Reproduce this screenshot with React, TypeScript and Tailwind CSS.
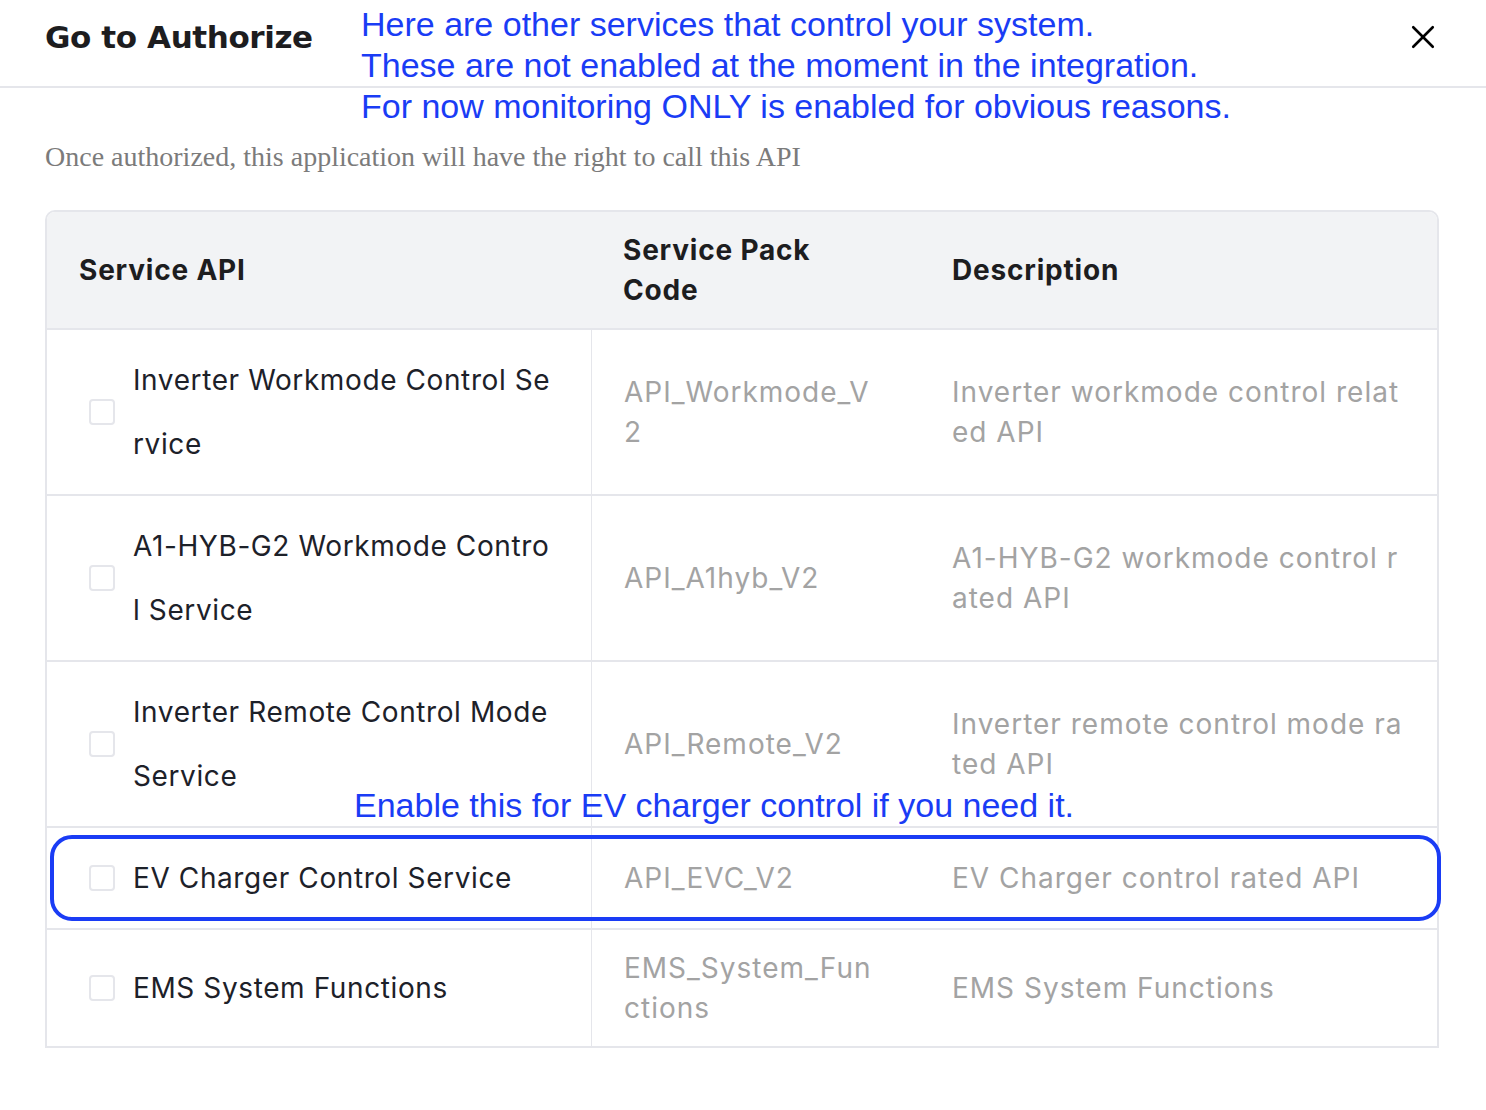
import { useState } from "react";

interface ServiceRow {
  id: number;
  name: string[];
  code: string[];
  desc: string[];
}

const services: ServiceRow[] = [
  { id: 1, name: ["Inverter Workmode Control Se", "rvice"], code: ["API_Workmode_V", "2"], desc: ["Inverter workmode control relat", "ed API"] },
  { id: 2, name: ["A1-HYB-G2 Workmode Contro", "l Service"], code: ["API_A1hyb_V2"], desc: ["A1-HYB-G2 workmode control r", "ated API"] },
  { id: 3, name: ["Inverter Remote Control Mode", "Service"], code: ["API_Remote_V2"], desc: ["Inverter remote control mode ra", "ted API"] },
  { id: 4, name: ["EV Charger Control Service"], code: ["API_EVC_V2"], desc: ["EV Charger control rated API"] },
  { id: 5, name: ["EMS System Functions"], code: ["EMS_System_Fun", "ctions"], desc: ["EMS System Functions"] },
];

const lines = (parts: string[]) =>
  parts.map((p, i) => (
    <span key={i} className="block whitespace-nowrap">
      {p}
    </span>
  ));

export default function App() {
  const [checked, setChecked] = useState<number[]>([]);

  const toggle = (id: number) => {
    setChecked((prev) => (prev.includes(id) ? prev.filter((x) => x !== id) : [...prev, id]));
  };

  return (
    <div className="relative w-[1486px] h-[1110px] bg-white overflow-hidden font-['Inter','Noto_Sans',sans-serif]">
      {/* header */}
      <div className="flex items-center justify-between h-[88px] pb-[12px] pl-[45px] pr-[50px] border-b-2 border-[#e5e6eb]">
        <h2 className="text-[31px] font-bold text-[#1d1d1f] font-['DejaVu_Sans',sans-serif] tracking-[-0.4px]">Go to Authorize</h2>
        <button className="w-[26px] h-[26px] flex items-center justify-center">
          <svg width="26" height="26" viewBox="0 0 24 24" fill="none" stroke="#000" strokeWidth="2.4" strokeLinecap="round">
            <line x1="3" y1="3" x2="21" y2="21" />
            <line x1="21" y1="3" x2="3" y2="21" />
          </svg>
        </button>
      </div>

      <div className="px-[45px] pt-[51px]">
        <p className="font-['Liberation_Serif',serif] text-[28px] leading-[36px] text-[#7b7b7b]">
          Once authorized, this application will have the right to call this API
        </p>

        <div className="mt-[35px] w-[1394px] border-2 border-[#e5e6eb] rounded-t-[10px] overflow-hidden">
          <div className="grid grid-cols-[544px_329px_1fr] bg-[#f2f3f5] border-b-2 border-[#e5e6eb] text-[28px] leading-[40px] font-bold tracking-[0.8px] text-[#1d1d1f]">
            <div className="flex items-center px-[32px] py-[18px]">Service API</div>
            <div className="flex flex-col justify-center px-[32px] py-[18px]">{lines(["Service Pack", "Code"])}</div>
            <div className="flex items-center px-[32px] py-[18px]">Description</div>
          </div>

          {services.map((s, i) => (
            <div
              key={s.id}
              className={`grid grid-cols-[544px_329px_1fr] text-[28px] ${i < services.length - 1 ? "border-b-2 border-[#e5e6eb]" : ""}`}
            >
              <div className="flex items-center gap-[18px] pl-[42px] pr-[10px] py-[18px]">
                <button
                  onClick={() => toggle(s.id)}
                  className={`shrink-0 w-[26px] h-[26px] rounded-[4px] border-2 ${checked.includes(s.id) ? "bg-[#165dff] border-[#165dff]" : "bg-white border-[#e5e6eb]"}`}
                />
                <div className="leading-[64px] tracking-[0.6px] text-[#1d2129]">{lines(s.name)}</div>
              </div>
              <div className="flex flex-col justify-center border-l border-[#e5e6eb] px-[32px] py-[18px] leading-[40px] tracking-[1px] text-[#a3a3a3]">
                {lines(s.code)}
              </div>
              <div className="flex flex-col justify-center px-[32px] py-[18px] leading-[40px] tracking-[1px] text-[#a3a3a3]">
                {lines(s.desc)}
              </div>
            </div>
          ))}
        </div>
      </div>

      {/* notes drawn over the dialog */}
      <div className="absolute left-[361px] top-[4px] font-['Liberation_Sans',Arial,sans-serif] text-[34px] leading-[41px] text-[#1a3cf5]">
        <p>Here are other services that control your system.</p>
        <p>These are not enabled at the moment in the integration.</p>
        <p>For now monitoring ONLY is enabled for obvious reasons.</p>
      </div>
      <p className="absolute left-[354px] top-[785px] font-['Liberation_Sans',Arial,sans-serif] text-[34px] leading-[41px] text-[#1a3cf5]">
        Enable this for EV charger control if you need it.
      </p>
      <div className="absolute left-[50px] top-[835px] w-[1391px] h-[86px] border-[4px] border-[#1a3cf5] rounded-[22px] pointer-events-none" />
    </div>
  );
}
